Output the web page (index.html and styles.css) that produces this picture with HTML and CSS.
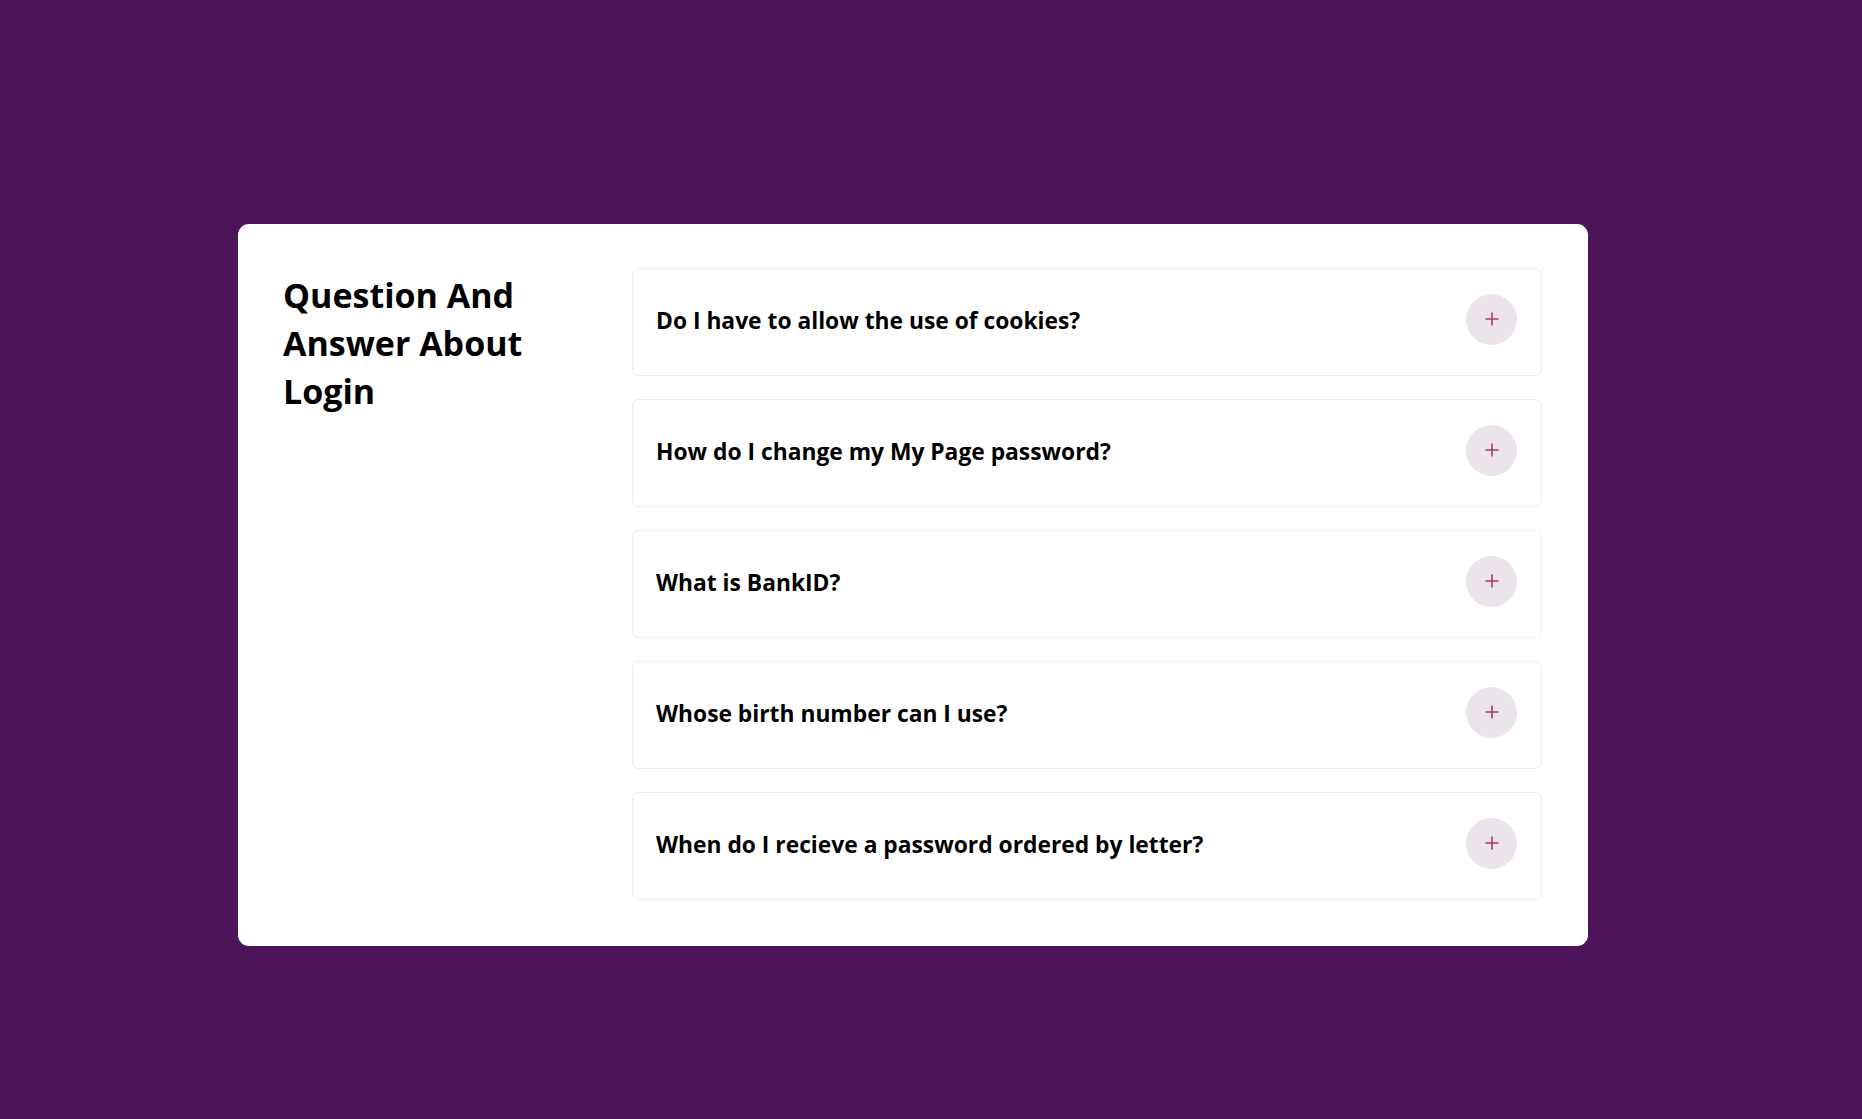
FILE: index.html
```html
<!DOCTYPE html>
<html lang="en">
<head>
<meta charset="utf-8">
<title>Question And Answer About Login</title>
<link rel="stylesheet" href="styles.css">
</head>
<body>
<main class="page">
  <section class="faq-card">
    <h1 class="faq-title">Question And Answer About Login</h1>
    <div class="faq-list">
      <div class="faq-item">
        <div class="faq-head">
          <span class="faq-q">Do I have to allow the use of cookies?</span>
          <button class="faq-toggle" aria-label="Expand"><svg width="14" height="14" viewBox="0 0 14 14"><path d="M7 0.5V13.5M0.5 7H13.5" stroke="currentColor" stroke-width="1.6" fill="none"/></svg></button>
        </div>
      </div>
      <div class="faq-item">
        <div class="faq-head">
          <span class="faq-q">How do I change my My Page password?</span>
          <button class="faq-toggle" aria-label="Expand"><svg width="14" height="14" viewBox="0 0 14 14"><path d="M7 0.5V13.5M0.5 7H13.5" stroke="currentColor" stroke-width="1.6" fill="none"/></svg></button>
        </div>
      </div>
      <div class="faq-item">
        <div class="faq-head">
          <span class="faq-q">What is BankID?</span>
          <button class="faq-toggle" aria-label="Expand"><svg width="14" height="14" viewBox="0 0 14 14"><path d="M7 0.5V13.5M0.5 7H13.5" stroke="currentColor" stroke-width="1.6" fill="none"/></svg></button>
        </div>
      </div>
      <div class="faq-item">
        <div class="faq-head">
          <span class="faq-q">Whose birth number can I use?</span>
          <button class="faq-toggle" aria-label="Expand"><svg width="14" height="14" viewBox="0 0 14 14"><path d="M7 0.5V13.5M0.5 7H13.5" stroke="currentColor" stroke-width="1.6" fill="none"/></svg></button>
        </div>
      </div>
      <div class="faq-item">
        <div class="faq-head">
          <span class="faq-q">When do I recieve a password ordered by letter?</span>
          <button class="faq-toggle" aria-label="Expand"><svg width="14" height="14" viewBox="0 0 14 14"><path d="M7 0.5V13.5M0.5 7H13.5" stroke="currentColor" stroke-width="1.6" fill="none"/></svg></button>
        </div>
      </div>
    </div>
  </section>
</main>
</body>
</html>
```

FILE: styles.css
```css
* { box-sizing: border-box; }
html, body { margin: 0; padding: 0; }
body {
  background: #4d1459;
  font-family: "Open Sans", "Noto Sans", "Liberation Sans", sans-serif;
  color: #000;
  min-height: 1119px;
}
.page {
  padding: 224px 0 0 238px;
}
.faq-card {
  width: 1350px;
  background: #fff;
  border-radius: 11px;
  padding: 44px 46px 46px 45px;
  display: flex;
  gap: 49px;
}
.faq-title {
  flex: 0 0 300px;
  margin: 0;
  padding-top: 3px;
  font-size: 34px;
  line-height: 48px;
  font-weight: 700;
}
.faq-list {
  flex: 0 0 910px;
  display: flex;
  flex-direction: column;
  gap: 23px;
}
.faq-item {
  border: 1px solid #ebebeb;
  border-radius: 7px;
  padding: 25px 24px 31px 23px;
}
.faq-head {
  display: flex;
  align-items: center;
  justify-content: space-between;
  height: 50px;
}
.faq-q {
  font-size: 22.8px;
  font-weight: 700;
  letter-spacing: 0;
  padding-top: 2px;
}
.faq-toggle {
  width: 51px;
  height: 51px;
  border-radius: 50%;
  border: none;
  background: #ebe5eb;
  color: #ad3a68;
  display: flex;
  align-items: center;
  justify-content: center;
  padding: 0;
}
```
